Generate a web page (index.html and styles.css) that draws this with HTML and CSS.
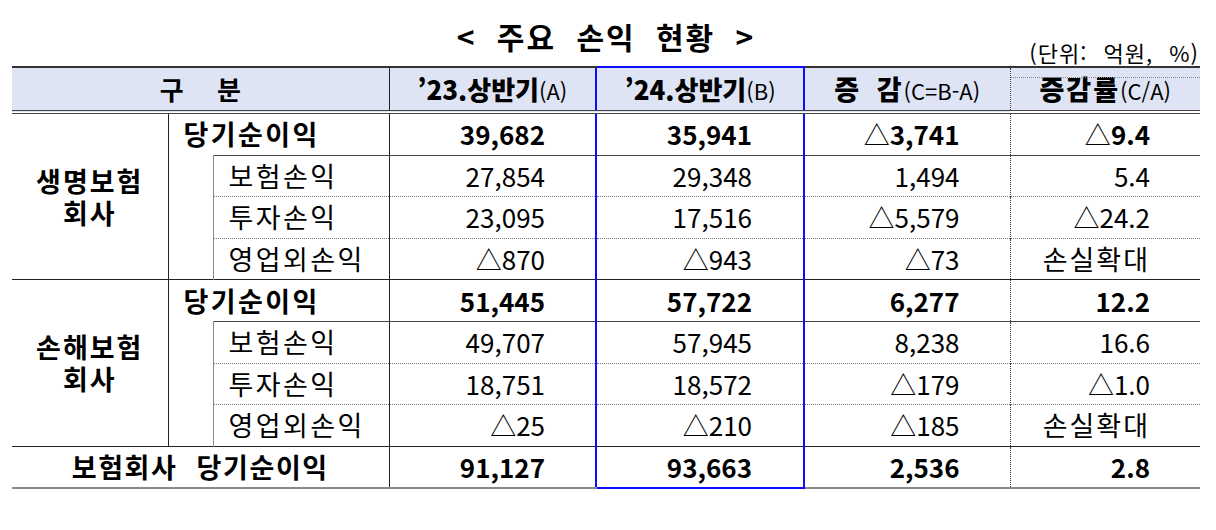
FILE: index.html
```html
<!DOCTYPE html>
<html lang="ko">
<head>
<meta charset="utf-8">
<title>주요 손익 현황</title>
<link rel="stylesheet" href="styles.css">
</head>
<body>
<div class="page">
  <div class="caption">
    <h1 class="title">&lt; 주요 손익 현황 &gt;</h1>
    <div class="unit">(단위: 억원, %)</div>
  </div>
  <table class="pl">
    <colgroup>
      <col class="c-grp"><col class="c-ind"><col class="c-item"><col class="c-a"><col class="c-b"><col class="c-c"><col class="c-d">
    </colgroup>
    <thead>
      <tr>
        <th colspan="3" class="h-div"><span class="wide">구 분</span></th>
        <th class="a"><b>’23.상반기</b><small>(A)</small></th>
        <th class="b"><b>’24.상반기</b><small>(B)</small></th>
        <th class="c"><b class="ko gap">증 감</b><small>(C=B-A)</small></th>
        <th class="d"><span class="dotline"></span><b class="ko">증감률</b><small>(C/A)</small></th>
      </tr>
    </thead>
    <tbody>
      <tr class="net">
        <th rowspan="4" class="grp"><span class="ln">생명보험</span><span class="ln">회사</span></th>
        <th colspan="2" class="item-net">당기순이익</th>
        <td class="num a">39,682</td>
        <td class="num b">35,941</td>
        <td class="num c"><span class="tri">△</span>3,741</td>
        <td class="num d"><span class="tri">△</span>9.4</td>
      </tr>
      <tr class="sub first">
        <td rowspan="3" class="indent"></td>
        <th class="item">보험손익</th>
        <td class="num a">27,854</td>
        <td class="num b">29,348</td>
        <td class="num c">1,494</td>
        <td class="num d">5.4</td>
      </tr>
      <tr class="sub dot">
        <th class="item">투자손익</th>
        <td class="num a">23,095</td>
        <td class="num b">17,516</td>
        <td class="num c"><span class="tri">△</span>5,579</td>
        <td class="num d"><span class="tri">△</span>24.2</td>
      </tr>
      <tr class="sub dot">
        <th class="item">영업외손익</th>
        <td class="num a"><span class="tri">△</span>870</td>
        <td class="num b"><span class="tri">△</span>943</td>
        <td class="num c"><span class="tri">△</span>73</td>
        <td class="num d"><span class="ko">손실확대</span></td>
      </tr>
      <tr class="net sect">
        <th rowspan="4" class="grp"><span class="ln">손해보험</span><span class="ln">회사</span></th>
        <th colspan="2" class="item-net">당기순이익</th>
        <td class="num a">51,445</td>
        <td class="num b">57,722</td>
        <td class="num c">6,277</td>
        <td class="num d">12.2</td>
      </tr>
      <tr class="sub first">
        <td rowspan="3" class="indent"></td>
        <th class="item">보험손익</th>
        <td class="num a">49,707</td>
        <td class="num b">57,945</td>
        <td class="num c">8,238</td>
        <td class="num d">16.6</td>
      </tr>
      <tr class="sub dot">
        <th class="item">투자손익</th>
        <td class="num a">18,751</td>
        <td class="num b">18,572</td>
        <td class="num c"><span class="tri">△</span>179</td>
        <td class="num d"><span class="tri">△</span>1.0</td>
      </tr>
      <tr class="sub dot">
        <th class="item">영업외손익</th>
        <td class="num a"><span class="tri">△</span>25</td>
        <td class="num b"><span class="tri">△</span>210</td>
        <td class="num c"><span class="tri">△</span>185</td>
        <td class="num d"><span class="ko">손실확대</span></td>
      </tr>
      <tr class="total sect">
        <th colspan="3" class="tot-label"><span class="wide2">보험회사 당기순이익</span></th>
        <td class="num a">91,127</td>
        <td class="num b">93,663</td>
        <td class="num c">2,536</td>
        <td class="num d">2.8</td>
      </tr>
    </tbody>
  </table>
</div>
</body>
</html>
```

FILE: styles.css
```css
html, body {
  margin: 0;
  background: #ffffff;
}

body {
  font-family: "Noto Sans CJK KR", "Noto Sans", sans-serif;
  color: #000000;
}

.page {
  width: 1188px;
  padding: 0 16px 0 12px;
}

.caption {
  display: grid;
  height: 66px;
}

.title {
  grid-area: 1 / 1;
  align-self: start;
  margin: 16px 0 0;
  text-align: center;
  font-size: 30px;
  line-height: 40px;
  font-weight: 700;
  letter-spacing: 2px;
  word-spacing: 10px;
}

.unit {
  grid-area: 1 / 1;
  align-self: end;
  text-align: right;
  font-size: 22px;
  line-height: 28px;
  letter-spacing: 1px;
  word-spacing: 9px;
  padding-right: 1px;
}

.pl {
  border-collapse: collapse;
  table-layout: fixed;
  width: 1188px;
}

.c-grp { width: 156px; }
.c-ind { width: 45px; }
.c-item { width: 176px; }
.c-a { width: 207px; }
.c-b { width: 208px; }
.c-c { width: 206px; }
.c-d { width: 190px; }

.pl th,
.pl td {
  padding: 0;
  height: 40.6px;
  font-size: 26px;
  line-height: 32px;
  white-space: nowrap;
}

.pl thead th {
  height: 42px;
  background: #dfe4f5;
  border-top: 2px solid #333333;
  border-bottom: 4px double #444444;
  text-align: center;
  font-weight: 700;
}

.pl thead th.d {
  position: relative;
}

.dotline {
  position: absolute;
  left: 0;
  right: 0;
  top: 9px;
  border-top: 1px dotted #8a8a8a;
}

.pl small {
  font-size: 22px;
  font-weight: 400;
}

.ko {
  font-size: 27px;
  letter-spacing: 2px;
}

.wide {
  word-spacing: 26px;
}

.wide2 {
  word-spacing: 10px;
}

.gap {
  word-spacing: 6px;
}

.pl .a {
  border-left: 1px solid #222222;
}

.pl .b {
  border-left: 2px solid #0d0dff;
  border-right: 2px solid #0d0dff;
}

.pl thead th.b {
  border-top: 2px solid #0d0dff;
}

.pl .d {
  border-left: 1px dotted #333333;
}

.num {
  text-align: right;
  padding-right: 50px !important;
  font-weight: 400;
}

.pl td.b.num {
  padding-right: 51px !important;
}

.tri {
  font-weight: 400;
}

.net td,
.net th,
.total td,
.total th {
  font-weight: 700;
}

.grp {
  border-right: 1px solid #222222;
  text-align: center;
  font-weight: 700;
  font-size: 27px !important;
  letter-spacing: 2px;
}

.ln {
  display: block;
  height: 32px;
  line-height: 32px;
}

.item-net,
.item {
  text-align: left;
  padding-left: 15px !important;
  font-size: 27px !important;
  letter-spacing: 2.4px;
}

.item {
  font-weight: 400;
}

.indent {
  border-right: 1px solid #8a8a8a;
}

.first .item,
.first td.num {
  border-top: 1px solid #444444;
}

.dot .item,
.dot td.num {
  border-top: 1px dotted #7a7a7a;
}

.sect th,
.sect td {
  border-top: 1px solid #222222;
}

.total th,
.total td {
  border-bottom: 2px solid #8a8a8a;
}

.pl .total td.b {
  border-bottom: 2px solid #0d0dff;
}

.tot-label {
  text-align: center;
  font-size: 27px !important;
  letter-spacing: 1.6px;
}
```
